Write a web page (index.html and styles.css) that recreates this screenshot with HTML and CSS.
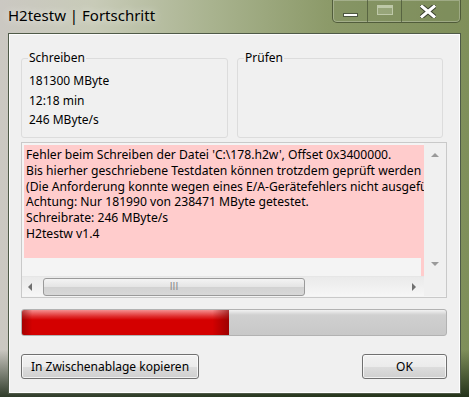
FILE: index.html
```html
<!DOCTYPE html>
<html lang="de">
  <head>
    <meta charset="UTF-8" />
    <title>H2testw | Fortschritt</title>
    <link rel="stylesheet" href="styles.css">
  </head>
  <body>
    <div class="window">
      <div class="titlebar">
        <span class="title">H2testw | Fortschritt</span>
        <div class="caption-buttons">
          <div class="cap-btn cap-min"><span class="min-glyph"></span></div>
          <div class="cap-btn cap-max"><span class="max-glyph"></span></div>
          <div class="cap-btn cap-close">
            <svg width="16" height="13" viewBox="0 0 16 13">
              <path d="M2 1.5 L14 11.5 M14 1.5 L2 11.5" stroke="#3a4030" stroke-width="5" stroke-linecap="square" />
              <path d="M2 1.5 L14 11.5 M14 1.5 L2 11.5" stroke="#ffffff" stroke-width="3" stroke-linecap="square" />
            </svg>
          </div>
        </div>
      </div>

      <div class="client">
        <div class="groups">
          <fieldset class="group">
            <legend>Schreiben</legend>
            <p>181300 MByte</p>
            <p>12:18 min</p>
            <p>246 MByte/s</p>
          </fieldset>
          <fieldset class="group">
            <legend>Prüfen</legend>
          </fieldset>
        </div>

        <!-- Log output -->
        <div class="logbox">
          <div class="log-main">
            <div class="log-text">
              <div class="log-pink">
                <p>Fehler beim Schreiben der Datei 'C:\178.h2w', Offset 0x3400000.</p>
                <p>Bis hierher geschriebene Testdaten können trotzdem geprüft werden</p>
                <p>(Die Anforderung konnte wegen eines E/A-Gerätefehlers nicht ausgeführt werden.)</p>
                <p>Achtung: Nur 181990 von 238471 MByte getestet.</p>
                <p>Schreibrate: 246 MByte/s</p>
                <p>H2testw v1.4</p>
              </div>
              <div class="log-rest"></div>
            </div>
            <div class="vscroll">
              <span class="arrow arrow-up"></span>
              <span class="arrow arrow-down"></span>
            </div>
          </div>
          <div class="log-bottom">
            <div class="hscroll">
              <span class="arrow arrow-left"></span>
              <div class="thumb"><span class="grip">III</span></div>
              <span class="arrow arrow-right"></span>
            </div>
            <div class="corner"></div>
          </div>
        </div>

        <div class="progress">
          <div class="progress-fill" style="width: 48.8%"></div>
        </div>

        <div class="buttons">
          <button class="btn">In Zwischenablage kopieren</button>
          <button class="btn btn-ok">OK</button>
        </div>
      </div>
    </div>
  </body>
</html>
```

FILE: styles.css
```css
* {
  margin: 0;
  padding: 0;
  box-sizing: border-box;
}

body {
  width: 469px;
  height: 397px;
  overflow: hidden;
  font-family: "Noto Sans", "Liberation Sans", sans-serif;
  background:
    linear-gradient(to bottom, rgba(0, 0, 0, 0) 88%, rgba(20, 35, 15, 0.85) 100%),
    linear-gradient(to right, #cbc8c2 0%, #c8cbb8 20%, #a9b38f 45%, #8c9a69 70%, #7f8f5a 100%);
}

.window {
  display: flex;
  flex-direction: column;
  height: 397px;
}

.titlebar {
  height: 33px;
  display: flex;
  align-items: flex-start;
  justify-content: space-between;
}

.title {
  padding: 5px 0 0 8px;
  font-size: 15px;
  color: #000;
  text-shadow: 0 0 8px rgba(255, 255, 255, 0.8);
}

.caption-buttons {
  display: flex;
  margin-right: 8px;
  height: 23px;
  border: 1px solid rgba(60, 70, 45, 0.7);
  border-top: none;
  border-radius: 0 0 5px 5px;
  box-shadow: inset 0 0 0 1px rgba(255, 255, 255, 0.25);
  background: rgba(120, 135, 90, 0.25);
}

.cap-btn {
  display: flex;
  align-items: center;
  justify-content: center;
  height: 100%;
}

.cap-min {
  width: 35px;
  border-right: 1px solid rgba(60, 70, 45, 0.6);
}

.cap-max {
  width: 34px;
  border-right: 1px solid rgba(60, 70, 45, 0.6);
}

.cap-close {
  width: 58px;
  padding-right: 6px;
}

.min-glyph {
  width: 15px;
  height: 4px;
  margin-top: 8px;
  background: #fff;
  border: 1px solid #4d5640;
}

.max-glyph {
  width: 16px;
  height: 10px;
  margin-bottom: 2px;
  border: 1px solid rgba(230, 235, 215, 0.5);
  border-top-width: 3px;
  background: rgba(200, 210, 180, 0.3);
}

.client {
  margin: 0 8px 3px 8px;
  flex: 1;
  background: #f0f0f0;
  border: 1px solid #4f5a48;
  box-shadow: inset 0 0 0 1px #fdfdfd;
  padding: 17px 13px 0 12px;
  font-size: 12px;
  color: #000;
}

.groups {
  display: flex;
  gap: 9px;
}

.group {
  width: 207px;
  height: 87px;
  border: 1px solid #dcdcdc;
  border-radius: 3px;
  padding: 6px 7px 0 7px;
}

.group + .group {
  width: 206px;
}

.group legend {
  padding: 0 1px;
  margin-left: -1px;
  font-size: 12px;
  line-height: 14px;
}

.group p {
  line-height: 19.5px;
}

.logbox {
  margin-top: 4px;
  width: 426px;
  height: 156px;
  border: 1px solid #c9c9c9;
  background: #f4f4f4;
  display: flex;
  flex-direction: column;
}

.log-main {
  flex: 1;
  display: flex;
}

.log-text {
  flex: 1;
  overflow: hidden;
  display: flex;
  flex-direction: column;
  padding: 2px 0 0 2px;
}

.log-pink {
  background: #ffcccc;
  height: 113px;
  padding: 2px 0 0 2px;
  white-space: nowrap;
  overflow: hidden;
  font-size: 12.15px;
}

.log-pink p {
  line-height: 15.8px;
}

.log-rest {
  flex: 1;
  margin-left: auto;
  width: 3px;
  background: #ffcccc;
}

.vscroll {
  width: 22px;
  background: #f0f0f0;
  display: flex;
  flex-direction: column;
  justify-content: space-between;
  align-items: center;
  padding: 10px 0 10px 0;
}

.log-bottom {
  height: 20px;
  display: flex;
  margin-bottom: 1px;
}

.hscroll {
  flex: 1;
  display: flex;
  align-items: center;
  background: linear-gradient(to bottom, #eaeaea, #f6f6f6);
  border-top: 1px solid #e6e6e6;
  padding: 0 8px 0 6px;
}

.corner {
  width: 22px;
  background: #f0f0f0;
}

.thumb {
  margin-left: 11px;
  width: 262px;
  height: 18px;
  border: 1px solid #9a9a9a;
  border-radius: 3px;
  background: linear-gradient(to bottom, #f3f3f3 0%, #e4e4e4 50%, #d2d2d2 51%, #d8d8d8 100%);
  display: flex;
  justify-content: center;
  align-items: center;
}

.grip {
  font-size: 10px;
  line-height: 10px;
  color: #8a8a8a;
  font-family: "Liberation Sans", sans-serif;
}

.arrow {
  width: 0;
  height: 0;
  border: 4px solid transparent;
}

.arrow-up {
  border-bottom: 4px solid #9a9a9a;
  border-top: none;
}

.arrow-down {
  border-top: 4px solid #9a9a9a;
  border-bottom: none;
}

.arrow-left {
  border-right: 4px solid #707070;
  border-left: none;
}

.arrow-right {
  margin-left: auto;
  border-left: 4px solid #707070;
  border-right: none;
}

.progress {
  margin-top: 11px;
  width: 426px;
  height: 27px;
  border: 1px solid #b2b2b2;
  border-radius: 3px;
  background: linear-gradient(to bottom, #f2f2f2 0%, #d0d0d0 20%, #c8c8c8 100%);
  overflow: hidden;
}

.progress-fill {
  height: 100%;
  background:
    linear-gradient(to right, rgba(120, 0, 0, 0.5) 0%, rgba(0, 0, 0, 0) 5%, rgba(0, 0, 0, 0) 92%, rgba(120, 0, 0, 0.6) 100%),
    linear-gradient(to bottom, #f59090 0%, #e03030 25%, #d40000 40%, #d40000 100%);
}

.buttons {
  margin-top: 18px;
  width: 426px;
  display: flex;
  justify-content: space-between;
}

.btn {
  height: 25px;
  padding: 0 8px;
  border: 1px solid #707070;
  border-radius: 3px;
  background: linear-gradient(to bottom, #f2f2f2 0%, #ebebeb 50%, #dddddd 51%, #cfcfcf 100%);
  box-shadow: inset 0 0 0 1px rgba(255, 255, 255, 0.7);
  font-family: "Noto Sans", "Liberation Sans", sans-serif;
  font-size: 12px;
  color: #000;
}

.btn:first-child {
  width: 178px;
}

.btn-ok {
  width: 85px;
}
```
